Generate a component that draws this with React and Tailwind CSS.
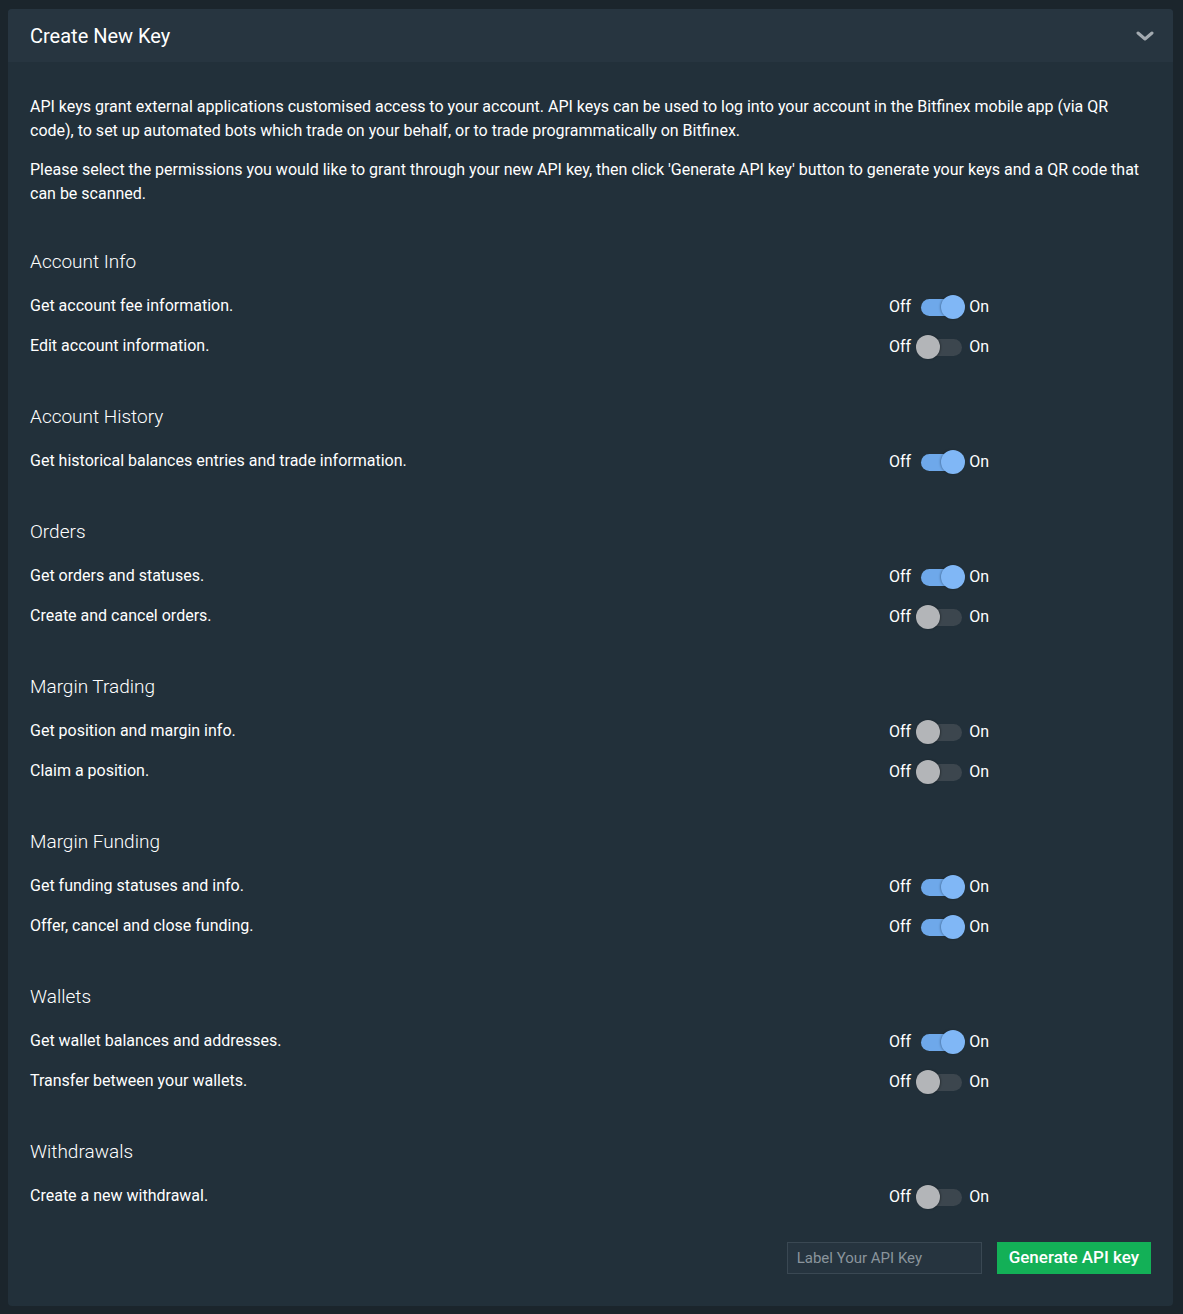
import React from "react";

const sections = [
  { title: "Account Info", rows: [["Get account fee information.", true], ["Edit account information.", false]] },
  { title: "Account History", rows: [["Get historical balances entries and trade information.", true]] },
  { title: "Orders", rows: [["Get orders and statuses.", true], ["Create and cancel orders.", false]] },
  { title: "Margin Trading", rows: [["Get position and margin info.", false], ["Claim a position.", false]] },
  { title: "Margin Funding", rows: [["Get funding statuses and info.", true], ["Offer, cancel and close funding.", true]] },
  { title: "Wallets", rows: [["Get wallet balances and addresses.", true], ["Transfer between your wallets.", false]] },
  { title: "Withdrawals", rows: [["Create a new withdrawal.", false]] },
];

function Toggle({ on }) {
  return (
    <div className="flex items-center text-white text-[16px]">
      <span>Off</span>
      <div className="relative ml-[9px] w-[43px] h-[24px] flex items-center">
        <div className={"ml-[1px] w-[41px] h-[17px] rounded-full " + (on ? "bg-[#6ea8ea]" : "bg-[#3c464e]")}></div>
        <div
          className={
            "absolute top-0 w-[24px] h-[24px] rounded-full " +
            (on ? "right-[-2px] bg-[#80b7f6] shadow-[-1px_0_2px_rgba(0,0,0,0.25)]" : "left-[-4px] bg-[#b3b5b8] shadow-[1px_0_2px_rgba(0,0,0,0.3)]")
          }
        ></div>
      </div>
      <span className="ml-[6px]">On</span>
    </div>
  );
}

export default function App() {
  return (
    <div className="min-h-[1314px] bg-[#1b252c] pt-[9px] pb-[9px] pl-[8px] pr-[10px]" style={{ fontFamily: "Roboto, 'Noto Sans', sans-serif" }}>
      <div className="rounded-[4px] bg-[#22303a] overflow-hidden">
        <div className="h-[53px] bg-[#273540] flex items-center justify-between pl-[22px] pr-[19px]">
          <span className="text-white text-[20px]">Create New Key</span>
          <svg width="18" height="12" viewBox="0 0 18 12" fill="none">
            <path d="M2 3l7 6 7-6" stroke="#a3aab0" strokeWidth="3" strokeLinecap="round" strokeLinejoin="round" />
          </svg>
        </div>
        <div className="px-[22px] pt-[33px] pb-[32px] text-white">
          <p className="text-[16px] leading-[24px]">
            API keys grant external applications customised access to your account. API keys can be used to log into your account in the Bitfinex mobile app (via QR code), to set up automated bots which trade on your behalf, or to trade programmatically on Bitfinex.
          </p>
          <p className="text-[16px] leading-[24px] mt-[15px]">
            Please select the permissions you would like to grant through your new API key, then click 'Generate API key' button to generate your keys and a QR code that can be scanned.
          </p>
          <div className="mt-[40px] flex flex-col gap-[34px]">
            {sections.map((s) => (
              <div key={s.title}>
                <h3 className="text-[19px] font-light leading-[32px]">{s.title}</h3>
                <div className="mt-[9px] flex flex-col">
                  {s.rows.map(([label, on]) => (
                    <div key={label} className="grid grid-cols-[859px_auto] items-center h-[40px]">
                      <span className="text-[16px] -mt-[3px]">{label}</span>
                      <Toggle on={on} />
                    </div>
                  ))}
                </div>
              </div>
            ))}
          </div>
          <div className="mt-[25px] flex justify-end items-center gap-[15px]">
            <div className="w-[195px] h-[32px] border border-[#3a4853] bg-[#26343f] flex items-center px-[9px] text-[15px] text-[#8a949c]">
              Label Your API Key
            </div>
            <button className="h-[32px] px-[12px] bg-[#13b057] text-white text-[17px] font-medium">Generate API key</button>
          </div>
        </div>
      </div>
    </div>
  );
}
